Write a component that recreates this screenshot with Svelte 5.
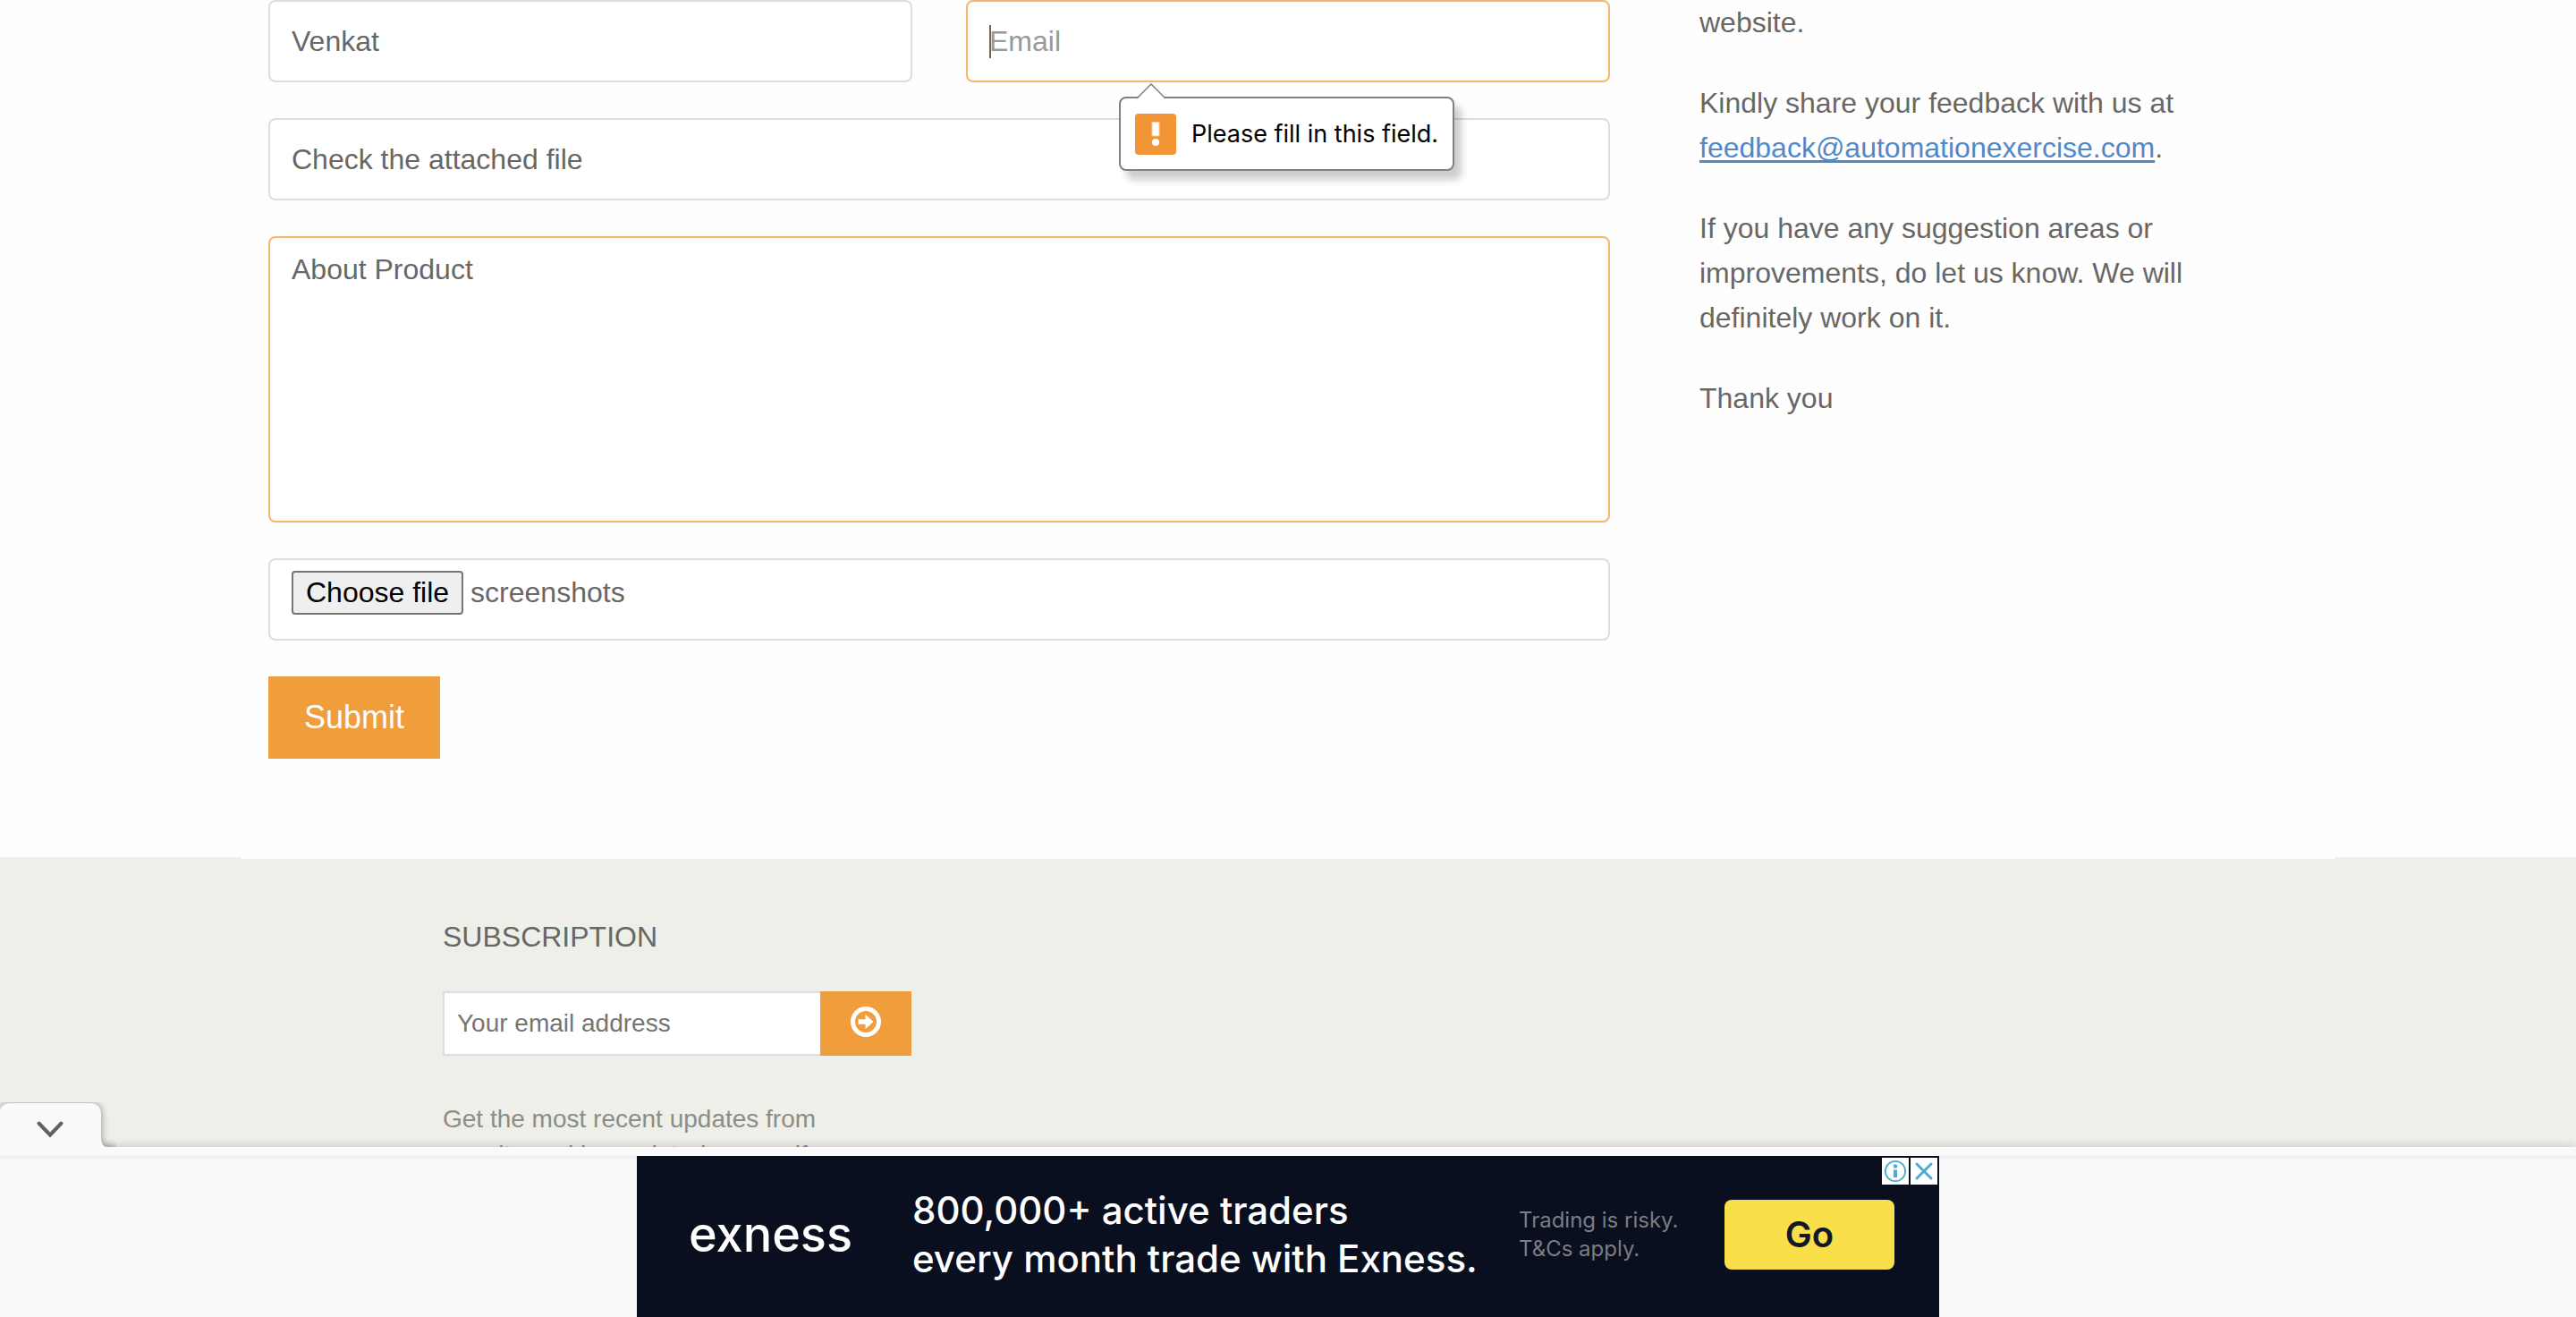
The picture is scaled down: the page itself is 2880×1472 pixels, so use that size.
<script>
  let name = $state('Venkat');
  let email = $state('');
  let subject = $state('Check the attached file');
  let message = $state('About Product');
  let fileName = $state('screenshots');
  let picker;

  function fileChosen(event) {
    fileName = event.currentTarget.files[0]?.name ?? fileName;
  }
</script>

<div class="page">
  <main class="container columns">
    <form class="contact" onsubmit={(e) => e.preventDefault()}>
      <div class="pair">
        <input class="field" type="text" aria-label="Name" placeholder="Name" bind:value={name} />
        <div class="email">
          <input class="field active" type="email" aria-label="Email" placeholder="Email" bind:value={email} />
          <span class="caret"></span>
          <div class="bubble" role="alert">
            <svg class="pointer" viewBox="0 0 34 18" aria-hidden="true">
              <path d="M1 18 17 1 33 18Z" fill="#fff" />
              <path d="M1 17 17 1 33 17" fill="none" stroke="#808080" stroke-width="1.5" />
            </svg>
            <svg class="warn" viewBox="0 0 46 46" aria-hidden="true">
              <rect width="46" height="46" rx="4" fill="#f29537" />
              <rect x="19" y="9.500" width="8" height="15.500" fill="#fff" stroke="#f9c998" stroke-width="1" />
              <circle cx="23" cy="32" r="4" fill="#fff" />
            </svg>
            <span>Please fill in this field.</span>
          </div>
        </div>
      </div>
      <input class="field" type="text" aria-label="Subject" placeholder="Subject" bind:value={subject} />
      <textarea class="field message active" aria-label="Your message" bind:value={message}></textarea>
      <div class="field upload">
        <button class="choose" type="button" onclick={() => picker.click()}>Choose file</button>
        <span>{fileName}</span>
        <input bind:this={picker} type="file" hidden aria-label="Attachment" onchange={fileChosen} />
      </div>
      <button class="submit" type="submit">Submit</button>
    </form>

    <aside class="info">
      <p>website.</p>
      <p>Kindly share your feedback with us at <a href="mailto:feedback@automationexercise.com">feedback@automationexercise.com</a>.</p>
      <p>If you have any suggestion areas or improvements, do let us know. We will definitely work on it.</p>
      <p>Thank you</p>
    </aside>
  </main>

  <footer>
    <div class="container footer-inner">
      <section class="subscribe">
        <h2>Subscription</h2>
        <form class="subscribe-row" onsubmit={(e) => e.preventDefault()}>
          <input type="email" aria-label="Your email address" placeholder="Your email address" />
          <button type="submit" aria-label="Subscribe">
            <svg viewBox="0 0 36 36" aria-hidden="true">
              <circle cx="18" cy="18" r="14.500" fill="none" stroke="#fff" stroke-width="5" />
              <path d="M9.500 15.200h8V9.800L26.500 18l-9 8.200v-5.400h-8z" fill="#fff" />
            </svg>
          </button>
        </form>
        <p>Get the most recent updates from <br />our site and be updated your self...</p>
      </section>
    </div>
  </footer>

  <div class="anchor">
    <button class="collapse" type="button" aria-label="Hide advertisement">
      <svg viewBox="0 0 130 60" aria-hidden="true">
        <path d="M0 60V8Q3 1 12 1H100Q113 1 113 14V40Q113 50 121 50H130V60Z" fill="#fafafa" />
        <path class="chevron" d="M43.500 23.500 56 36.500 68.500 23.500" fill="none" stroke="#616161" stroke-width="4" stroke-linecap="round" />
      </svg>
    </button>
    <div class="tray">
      <div class="ad">
        <strong class="brand">exness</strong>
        <p class="pitch">800,000+ active traders<br />every month trade with Exness.</p>
        <p class="terms">Trading is risky.<br />T&amp;Cs apply.</p>
        <a class="go" href="#go">Go</a>
        <div class="choices">
          <button type="button" aria-label="Why this ad">
            <svg viewBox="0 0 30 30" aria-hidden="true">
              <circle cx="15" cy="15" r="11.200" fill="none" stroke="#4bacce" stroke-width="1.800" />
              <circle cx="15" cy="9.500" r="2.200" fill="#4bacce" />
              <path d="M13 13.500h4V22h-4z" fill="#4bacce" />
            </svg>
          </button>
          <button type="button" aria-label="Close ad">
            <svg viewBox="0 0 30 30" aria-hidden="true">
              <path d="M7 7 23 23M23 7 7 23" stroke="#4bacce" stroke-width="3" stroke-linecap="round" />
            </svg>
          </button>
        </div>
      </div>
    </div>
  </div>
</div>

<style>
  :global(body) {
    background: #fefefe;
  }

  .page {
    height: 100vh;
    overflow: hidden;
    position: relative;
    color: #696763;
    font: 32px/50px 'Liberation Sans', Arial, sans-serif;
  }

  .page * {
    box-sizing: border-box;
  }

  button,
  input,
  textarea {
    font-family: inherit;
  }

  p,
  h2 {
    margin: 0;
  }

  .container {
    max-width: 2340px;
    margin: 0 auto;
  }

  .columns {
    display: grid;
    grid-template-columns: 2fr 1fr;
    padding-bottom: 110px;
  }

  .contact {
    display: flex;
    flex-direction: column;
    gap: 40px;
    padding: 0 30px;
  }

  .pair {
    display: grid;
    grid-template-columns: 1fr 1fr;
    gap: 60px;
  }

  .email {
    position: relative;
  }

  .field {
    display: block;
    width: 100%;
    height: 92px;
    padding: 0 24px;
    border: 2px solid #ddd;
    border-radius: 8px;
    background: #fff;
    color: #696763;
    font-size: 32px;
    outline: none;
  }

  .field.active {
    border-color: #f5b66d;
  }

  .field::placeholder {
    color: #999;
    opacity: 1;
  }

  .message {
    height: 320px;
    padding: 12px 24px;
    line-height: 46px;
    resize: none;
  }

  .upload {
    display: flex;
    align-items: flex-start;
    gap: 8px;
    padding-top: 12px;
    line-height: 48px;
  }

  .choose {
    padding: 0 14px;
    border: 2px solid #767676;
    border-radius: 4px;
    background: #efefef;
    color: #000;
    font-size: 32px;
    line-height: 45px;
  }

  .submit {
    align-self: flex-start;
    padding: 0 40px;
    border: 0;
    background: #f09d3b;
    color: #fff;
    font-size: 36px;
    line-height: 92px;
  }

  .caret {
    position: absolute;
    left: 26px;
    top: 28px;
    width: 2px;
    height: 37px;
    background: #696763;
  }

  .bubble {
    position: absolute;
    z-index: 1;
    left: 171px;
    top: 108px;
    display: flex;
    align-items: center;
    gap: 17px;
    height: 83px;
    padding: 0 16px;
    border: 2px solid #808080;
    border-radius: 8px;
    background: #fff;
    box-shadow: 8px 10px 8px rgba(0, 0, 0, 0.2);
    color: #000;
    font: 27px/40px Inter, sans-serif;
    white-space: nowrap;
  }

  .pointer {
    position: absolute;
    left: 17px;
    top: -17px;
    width: 34px;
    height: 18px;
  }

  .warn {
    width: 46px;
    height: 46px;
  }

  .info {
    padding: 0 50px 0 70px;
  }

  .info p {
    margin-bottom: 40px;
  }

  .info a {
    color: #5188c8;
    text-decoration-thickness: 3px;
    text-decoration-skip-ink: none;
    text-underline-offset: 3px;
  }

  footer {
    min-height: 600px;
    background: #eeefe9;
  }

  .footer-inner {
    padding: 67px 30px 0 225px;
    border-top: 2px solid #fefefe;
  }

  .subscribe {
    width: 524px;
  }

  h2 {
    margin-bottom: 41px;
    font-size: 32px;
    font-weight: 400;
    line-height: 40px;
    text-transform: uppercase;
  }

  .subscribe-row {
    display: flex;
  }

  .subscribe-row input {
    flex: 1;
    min-width: 0;
    height: 72px;
    padding: 0 14px;
    border: 2px solid #ddd;
    border-right: 0;
    border-radius: 0;
    background: #fff;
    font-size: 28px;
  }

  .subscribe-row input::placeholder {
    color: #757575;
  }

  .subscribe-row button {
    display: grid;
    place-items: center;
    width: 102px;
    height: 72px;
    padding: 0 0 4px;
    border: 0;
    background: #f09d3b;
  }

  .subscribe-row svg {
    width: 36px;
    height: 36px;
  }

  .subscribe p {
    margin-top: 51px;
    color: #8c8c88;
    font-size: 28px;
    font-weight: 300;
    line-height: 40px;
    white-space: nowrap;
  }

  .anchor {
    position: absolute;
    left: 0;
    right: 0;
    bottom: 0;
    padding-top: 10px;
    background: #fafafa;
    box-shadow: 0 0 10px rgba(0, 0, 0, 0.2);
  }

  .collapse {
    position: absolute;
    left: 0;
    bottom: 180px;
    width: 130px;
    height: 60px;
    padding: 0;
    border: 0;
    background: none;
  }

  .collapse svg {
    display: block;
    width: 130px;
    height: 60px;
    filter: drop-shadow(0 0 4px rgba(0, 0, 0, 0.4));
    clip-path: inset(0);
  }

  .tray {
    background: linear-gradient(#ececec, #fafafa 6px);
  }

  .ad {
    position: relative;
    display: flex;
    align-items: center;
    max-width: 1456px;
    height: 180px;
    margin: 0 auto;
    padding: 0 50px 4px 58px;
    background: #090f1f;
    color: #fff;
    font-family: Inter, sans-serif;
  }

  .brand {
    width: 250px;
    font-size: 54px;
    font-weight: 500;
  }

  .pitch {
    flex: 1;
    font-size: 42px;
    font-weight: 500;
    line-height: 54px;
    white-space: nowrap;
  }

  .terms {
    width: 230px;
    color: #7b7d82;
    font-size: 24px;
    line-height: 32px;
  }

  .go {
    width: 190px;
    border-radius: 8px;
    background: #f9df4a;
    color: #111827;
    font-size: 40px;
    font-weight: 600;
    line-height: 78px;
    text-align: center;
    text-decoration: none;
  }

  .choices {
    position: absolute;
    top: 2px;
    right: 2px;
    display: flex;
    gap: 2px;
  }

  .choices button {
    width: 30px;
    height: 30px;
    padding: 0;
    border: 0;
    background: #fff;
  }

  .choices svg {
    display: block;
    width: 30px;
    height: 30px;
  }
</style>
